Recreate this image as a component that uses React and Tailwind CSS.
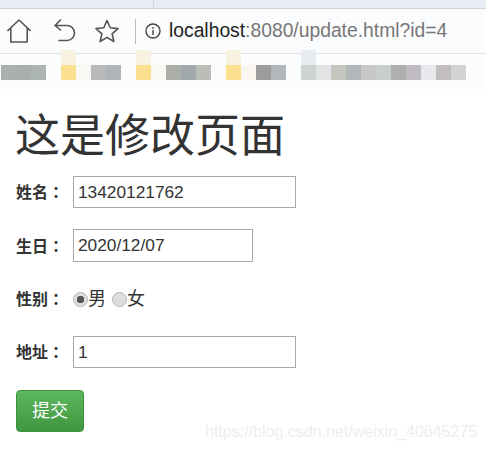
const top = { 4: 'bg-[#f7f3e0]', 9: 'bg-[#f7f3e0]', 15: 'bg-[#f7f3e0]', 20: 'bg-[#e9ecee]' };
const main = ['bg-[#acafaf]','bg-[#aaadad]','bg-[#acb4b3]','', 'bg-[#fbe08f]','bg-[#f8f8f4]','bg-[#b8b9bb]','bg-[#b0b5b8]','', 'bg-[#fbe08f]','bg-[#f9f9f4]','bg-[#acaea8]','bg-[#a2a9ab]','bg-[#bbbdb9]','', 'bg-[#fbe08f]','bg-[#f9f7ef]','bg-[#9b9c9e]','bg-[#b2b7b9]','', 'bg-[#cdd3d3]','bg-[#e2e4e5]','bg-[#c6c6c1]','bg-[#b2b7ba]','bg-[#c6c8c8]','bg-[#c9cdcc]','bg-[#b0afaf]','bg-[#c0bcc2]','bg-[#e8e8ed]','bg-[#c2bec0]','bg-[#d3d4d1]'];

function Field({ label, tall, children }) {
  return (
    <div className={`flex items-center mb-[21px] ${tall ? 'h-[33px]' : 'h-8'}`}>
      <label className="w-[57px] shrink-0 font-bold text-[#333]">{label}<span className="font-['Noto_Sans_CJK_TC',sans-serif]">：</span></label>
      {children}
    </div>
  );
}

const inputCls = "h-full border border-[#a9a9a9] px-1 bg-white text-[#333] text-[17.3px] outline-none";
const radioCls = "appearance-none w-[15px] h-[15px] rounded-full border border-[#b5b5b5] bg-[#dedede] checked:bg-[radial-gradient(circle,#555_0_3.5px,#dedede_4px)]";

export default function App() {
  return (
    <div className="w-[486px] h-[449px] overflow-hidden relative bg-white font-['Liberation_Sans','Noto_Sans_CJK_SC',sans-serif] text-[16px] text-[#333]">
      <div className="h-[9px] bg-[#e9ebf5] border-b border-[#d5d6dc] flex justify-end">
        <div className="w-[333px] h-full border-l border-[#d5d6dc]"></div>
      </div>
      <div className="h-[45px] bg-[#fbfcfe] border-b border-[#e0e1e5] flex items-center text-[#555]">
        <svg className="ml-[7px] w-6 h-6" viewBox="0 0 24 24" fill="none" stroke="#555" strokeWidth="1.6" strokeLinejoin="round"><path d="M0.5 12 12 1 23.5 12M3.8 9.5V23H20.2V9.5" /></svg>
        <svg className="ml-[23px] w-[22px] h-[24px]" viewBox="0 0 22 24" fill="none" stroke="#555" strokeWidth="1.6" strokeLinecap="round" strokeLinejoin="round"><path d="M6.5 1 1 6.5 6.5 11M1.5 6.5H13a7.5 7.5 0 0 1 0 15H5" /></svg>
        <svg className="ml-[19px] w-6 h-6" viewBox="0 0 24 24" fill="none" stroke="#555" strokeWidth="1.6" strokeLinejoin="round"><path d="M12 1.5 15.2 8.8 23 9.6 17.1 14.8 18.9 22.5 12 18.4 5.100 22.500 6.900 14.800 1 9.600 8.800 8.800Z" /></svg>
        <div className="ml-[16px] w-px h-[25px] bg-[#b9babc]"></div>
        <svg className="ml-[9px] w-[16px] h-[16px]" viewBox="0 0 16 16" fill="none" stroke="#444" strokeWidth="1.4"><circle cx="8" cy="8" r="7" /><path d="M8 7v5M8 4v1.800" /></svg>
        <span className="ml-[8px] text-[19.3px]"><span className="text-[#222]">localhost</span><span className="text-[#777]">:8080/update.html?id=4</span></span>
      </div>
      <div className="h-[35px] bg-[#fbfcfe] relative">
        <div className="absolute left-px top-[11px] flex">
          {main.map((c, i) => <div key={i} className={`w-[15px] h-[15px] ${c}`}></div>)}
        </div>
        <div className="absolute left-px top-[-4px] flex">
          {main.map((_, i) => <div key={i} className={`w-[15px] h-[15px] ${top[i] || ''}`}></div>)}
        </div>
      </div>
      <div className="pl-4">
        <h1 className="text-[45px] leading-[50px] font-normal mt-[23px] mb-[14px] -ml-px">这是修改页面</h1>
        <Field label="姓名"><input className={`${inputCls} w-[223px]`} defaultValue="13420121762" /></Field>
        <Field label="生日" tall><input className={`${inputCls} w-[180px]`} defaultValue="2020/12/07" /></Field>
        <Field label="性别">
          <input type="radio" name="g" defaultChecked className={radioCls} />
          <span className="w-[24px] text-[18px]">男</span>
          <input type="radio" name="g" className={radioCls} />
          <span className="text-[18px]">女</span>
        </Field>
        <Field label="地址"><input className={`${inputCls} w-[223px]`} defaultValue="1" /></Field>
        <button className="mt-px w-[68px] h-[42px] rounded-[4px] border border-[#3e8f3e] bg-gradient-to-b from-[#5cb85c] to-[#419641] text-white text-[18px]">提交</button>
      </div>
      <div className="absolute left-[205px] top-[420px] text-[16px] text-[#eeeeee]">https://blog.csdn.net/weixin_40645275</div>
    </div>
  );
}
